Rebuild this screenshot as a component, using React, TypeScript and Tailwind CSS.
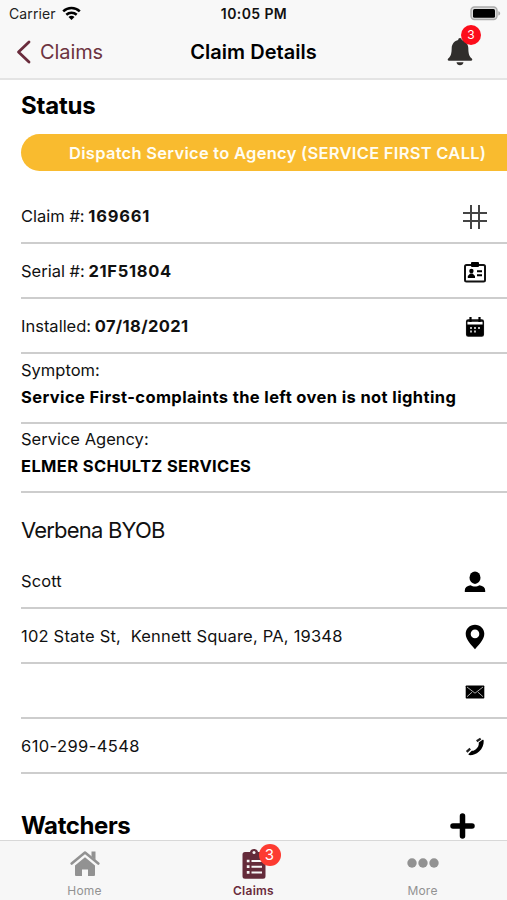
import type { ReactNode } from "react";

function Row({ children, icon }: { children?: ReactNode; icon: ReactNode }) {
  return (
    <div className="flex h-[55px] items-center justify-between border-b-2 border-[#cdcdcd] pr-[19px] pt-[2px] text-[16.5px]">
      <div className="whitespace-pre">{children}</div>
      <div className="flex w-[26px] shrink-0 justify-center">{icon}</div>
    </div>
  );
}

function StackedRow({ label, value }: { label: string; value: string }) {
  return (
    <div className="h-[69.5px] border-b-2 border-[#cdcdcd] pt-[2.5px] text-[16.5px] leading-[27px]">
      <div className="whitespace-nowrap">{label}</div>
      <div className="whitespace-nowrap font-bold tracking-[0.38px] text-black">{value}</div>
    </div>
  );
}

const HashIcon = () => (
  <svg width="26" height="26" viewBox="0 0 26 26" stroke="#444" strokeWidth="2" fill="none">
    <path d="M9 1v24M17 1v24M1 9h24M1 17h24" />
  </svg>
);
const IdIcon = () => (
  <svg width="24" height="22" viewBox="0 0 24 22">
    <rect x="2" y="4" width="20" height="16.5" rx="1.5" fill="none" stroke="#111" strokeWidth="2" />
    <rect x="8" y="1" width="8" height="5" rx="1" fill="#000" />
    <circle cx="8.4" cy="10" r="2.200" />
    <path d="M4.800 17v-2l2.400-2.500h2.400l2.400 2.500v2zM14 9.300h5v2h-5zM14 13.300h5v2h-5z" />
  </svg>
);
const CalendarIcon = () => (
  <svg width="20" height="22" viewBox="0 0 20 22">
    <rect x="1.700" y="4" width="16.600" height="16" rx="1.500" fill="#fff" stroke="#111" strokeWidth="1.500" />
    <path d="M2 8.500h16v10a1.500 1.500 0 0 1-1.500 1.500h-13A1.500 1.500 0 0 1 2 18.500z" fill="#000" />
    <path d="M5.500 1v5M14.500 1v5" stroke="#000" strokeWidth="2.200" />
    <path d="M2 5h16" stroke="#000" strokeWidth="1.500" />
    <path d="M5 12h2M9 12h2M13 12h2M5 15.500h2M9 15.500h2" stroke="#bbb" strokeWidth="1.800" />
  </svg>
);
const PersonIcon = () => (
  <svg width="22" height="22" viewBox="0 0 22 22">
    <ellipse cx="11" cy="6.700" rx="5.500" ry="6.200" />
    <path d="M.8 21v-1.500c0-3 2-4.700 5.700-5.300 2.600 1.800 6.400 1.800 9 0 3.700.6 5.700 2.300 5.700 5.300V21z" />
  </svg>
);
const PinIcon = () => (
  <svg width="20" height="26" viewBox="0 0 20 26">
    <path fillRule="evenodd" d="M10 .8c-5.300 0-9.300 4-9.300 9 0 5.800 5.500 11.200 9.300 15.400 3.800-4.200 9.300-9.600 9.300-15.400 0-5-4-9-9.300-9zm0 4.800a4.300 4.300 0 1 1 0 8.600 4.300 4.300 0 0 1 0-8.600z" />
  </svg>
);
const MailIcon = () => (
  <svg width="20" height="14" viewBox="0 0 20 14">
    <rect x=".7" y=".5" width="18.600" height="13" rx=".7" />
    <path d="M2 2l8 6.200L18 2M2 11.700l5-4.500M18 11.700l-5-4.500" fill="none" stroke="#bbb" strokeWidth=".9" />
  </svg>
);
const PhoneIcon = () => (
  <svg width="20" height="20" viewBox="0 0 20 20">
    <path d="M13.800 5.600l3.800-2.800c.7-.2 1.100.3 1.100 1.200.1 3.700-1.300 7.600-4.600 10.500-3 2.700-6 3.700-9 3.700-1.200 0-2-.5-1.600-1.200l3.300-3.300c1.300.5 2.700-.2 4.300-1.600 1.700-1.500 2.900-3.200 2.700-6.500z" />
    <path d="M11.700 4.300l4-2.700M1.700 14.800l3.500-3.200" stroke="#222" strokeWidth="2.300" />
  </svg>
);

export default function App() {
  return (
    <div className="flex h-[900px] w-[507px] flex-col overflow-hidden bg-white font-['Inter','Liberation_Sans',sans-serif] text-[#111]">
      <header className="h-20 shrink-0 border-b-2 border-[#e4e4e4] bg-[#f8f8f8]">
        <div className="grid h-[27px] grid-cols-3 items-center pl-[9px] pr-[6px]">
          <div className="flex items-center gap-[6px] text-[14px] text-[#222]">
            <span className="tracking-[0.1px]">Carrier</span>
            <svg width="19" height="15" viewBox="0 0 19 15" fill="none" stroke="#000" strokeWidth="2.500">
              <path d="M1.200 5.400c4.700-4.500 11.900-4.500 16.600 0M4.300 8.800c3-2.700 7.400-2.700 10.400 0" />
              <path d="M9.500 14l-3-3.100c1.700-1.400 4.300-1.400 6 0z" fill="#000" stroke="none" />
            </svg>
          </div>
          <div className="whitespace-nowrap pr-[2px] text-center text-[14px] font-semibold tracking-[0.4px]">10:05 PM</div>
          <svg className="-mt-px justify-self-end" width="31" height="15" viewBox="0 0 31 15">
            <rect x="1" y="1" width="26" height="12.500" rx="3.500" fill="#ddd" stroke="#aaa" strokeWidth="1.400" />
            <rect x="3" y="3" width="22" height="8.700" rx="1.500" />
            <path d="M28.300 5.200c2.500.6 2.500 3.700 0 4.300z" fill="#aaa" />
          </svg>
        </div>
        <div className="grid h-[49px] grid-cols-3 items-center">
          <div className="flex items-center gap-[9px] pl-4 text-[20px] text-[#6d3340]">
            <svg width="15" height="24" viewBox="0 0 15 24" fill="none" stroke="#6a2c3c" strokeWidth="2.800" strokeLinecap="round" strokeLinejoin="round">
              <path d="M13 2L2.500 12 13 22" />
            </svg>
            <span className="tracking-[-0.1px]">Claims</span>
          </div>
          <h1 className="whitespace-nowrap text-center text-[20px] font-semibold tracking-[0.03px] text-black">Claim Details</h1>
          <div className="relative mr-[33px] justify-self-end">
            <svg width="28" height="28" viewBox="0 0 28 28" fill="#302e2c">
              <path d="M14 0c-1.100 0-1.800.8-1.800 1.900C8.500 2.700 5.800 5.900 5.700 10c-.1 6-.9 8.200-3.500 10.500-.9.800-.5 2.200.8 2.200h22c1.300 0 1.700-1.400.8-2.200-2.600-2.300-3.400-4.500-3.500-10.500-.1-4.100-2.800-7.300-6.500-8.100C15.800.8 15.100 0 14 0zM10.500 24.200h7c-.3 1.800-1.600 3-3.500 3s-3.200-1.200-3.500-3z" />
            </svg>
            <span className="absolute left-[15px] top-[-13px] flex size-5 items-center justify-center rounded-full bg-[#fc0d1b] text-[12px] text-white">3</span>
          </div>
        </div>
      </header>

      <main className="h-[760px] shrink-0 overflow-hidden pl-[21px]">
        <h2 className="pt-[10px] text-[24px] font-bold leading-8 tracking-[-0.2px] text-black">Status</h2>
        <div className="mt-3 flex h-[36.500px] items-center whitespace-nowrap rounded-l-full bg-[#f9bb2f] pl-[48px] pt-[2px] text-[16.500px] font-semibold text-[#fffdf2]">
          <span className="tracking-[0.28px]">Dispatch Service to Agency (SERVICE FIRST CALL)</span>
        </div>
        <div className="mt-[18.500px]">
          <Row icon={<HashIcon />}>Claim #: <b className="-ml-px tracking-[0.8px]">169661</b></Row>
          <Row icon={<IdIcon />}>Serial #: <b className="-ml-px tracking-[0.7px]">21F51804</b></Row>
          <Row icon={<CalendarIcon />}>Installed: <b className="-ml-px tracking-[0.35px]">07/18/2021</b></Row>
          <StackedRow label="Symptom:" value="Service First-complaints the left oven is not lighting" />
          <StackedRow label="Service Agency:" value="ELMER SCHULTZ SERVICES" />
        </div>
        <h3 className="flex h-[61px] items-end pb-[10.500px] text-[22px] leading-7 tracking-[-0.8px]">Verbena BYOB</h3>
        <div>
          <Row icon={<PersonIcon />}><span className="tracking-[0.1px]">Scott</span></Row>
          <Row icon={<PinIcon />}><span className="tracking-[0.2px]">{"102 State St,  Kennett Square, PA, 19348"}</span></Row>
          <Row icon={<MailIcon />} />
          <Row icon={<PhoneIcon />}><span className="tracking-[0.4px]">610-299-4548</span></Row>
        </div>
        <div className="mt-[35.500px] flex h-8 items-center justify-between pr-8">
          <h2 className="text-[24px] font-bold tracking-[-0.4px] text-black">Watchers</h2>
          <svg width="25" height="26" viewBox="0 0 25 26" stroke="#000" strokeWidth="5.500" strokeLinecap="round">
            <path d="M12.500 3v20M3 13h19" />
          </svg>
        </div>
      </main>

      <nav className="grid h-[60px] shrink-0 grid-cols-3 border-t border-[#d8d8d8] bg-[#f7f7f7] text-[12px] text-[#929292]">
        <div className="flex flex-col items-center">
          <svg className="mt-[8px]" width="30" height="28" viewBox="0 0 30 28" fill="#929292">
            <path d="M5 16.500L15 8.300l10 8.200V26a1 1 0 0 1-1 1h-6v-6.500h-6V27H6a1 1 0 0 1-1-1z" />
            <path d="M1.700 14.500L15 3.500l13.300 11" fill="none" stroke="#929292" strokeWidth="2.600" strokeLinecap="round" strokeLinejoin="round" />
            <path d="M21.500 2.500h4v8.500l-4-3.500z" />
          </svg>
          <span className="mt-[6px] leading-4 tracking-[0.2px]">Home</span>
        </div>
        <div className="flex flex-col items-center text-[#6a2c3c]">
          <div className="relative mt-[7px] h-[31px]">
            <svg width="24" height="31" viewBox="0 0 24 31">
              <path d="M3 4h5c.5-4 7.500-4 8 0h5a2.500 2.500 0 0 1 2.500 2.500v21.700A2.500 2.500 0 0 1 21 30.700H3a2.500 2.500 0 0 1-2.500-2.500V6.500A2.500 2.500 0 0 1 3 4z" fill="#642b3a" />
              <circle cx="12" cy="4.500" r="1.500" fill="#f7f7f7" />
              <path d="M9.500 13H20M9.500 18.700H20M9.500 24.400H20" stroke="#f7f7f7" strokeWidth="2" />
              <path d="M4.800 13h2.700M4.800 18.700h2.700M4.800 24.400h2.700" stroke="#f7f7f7" strokeWidth="2.700" />
            </svg>
            <span className="absolute left-[17px] top-[-4px] flex size-[22px] items-center justify-center rounded-full bg-[#fd3b31] text-[15px] text-white">3</span>
          </div>
          <span className="mt-[4px] font-semibold leading-4 tracking-[0.25px]">Claims</span>
        </div>
        <div className="flex flex-col items-center">
          <svg className="mt-[8px]" width="32" height="28" viewBox="0 0 32 28" fill="#929292">
            <circle cx="5" cy="14" r="4.700" />
            <circle cx="16" cy="14" r="4.700" />
            <circle cx="27" cy="14" r="4.700" />
          </svg>
          <span className="mt-[6px] leading-4 tracking-[0.2px]">More</span>
        </div>
      </nav>
    </div>
  );
}
